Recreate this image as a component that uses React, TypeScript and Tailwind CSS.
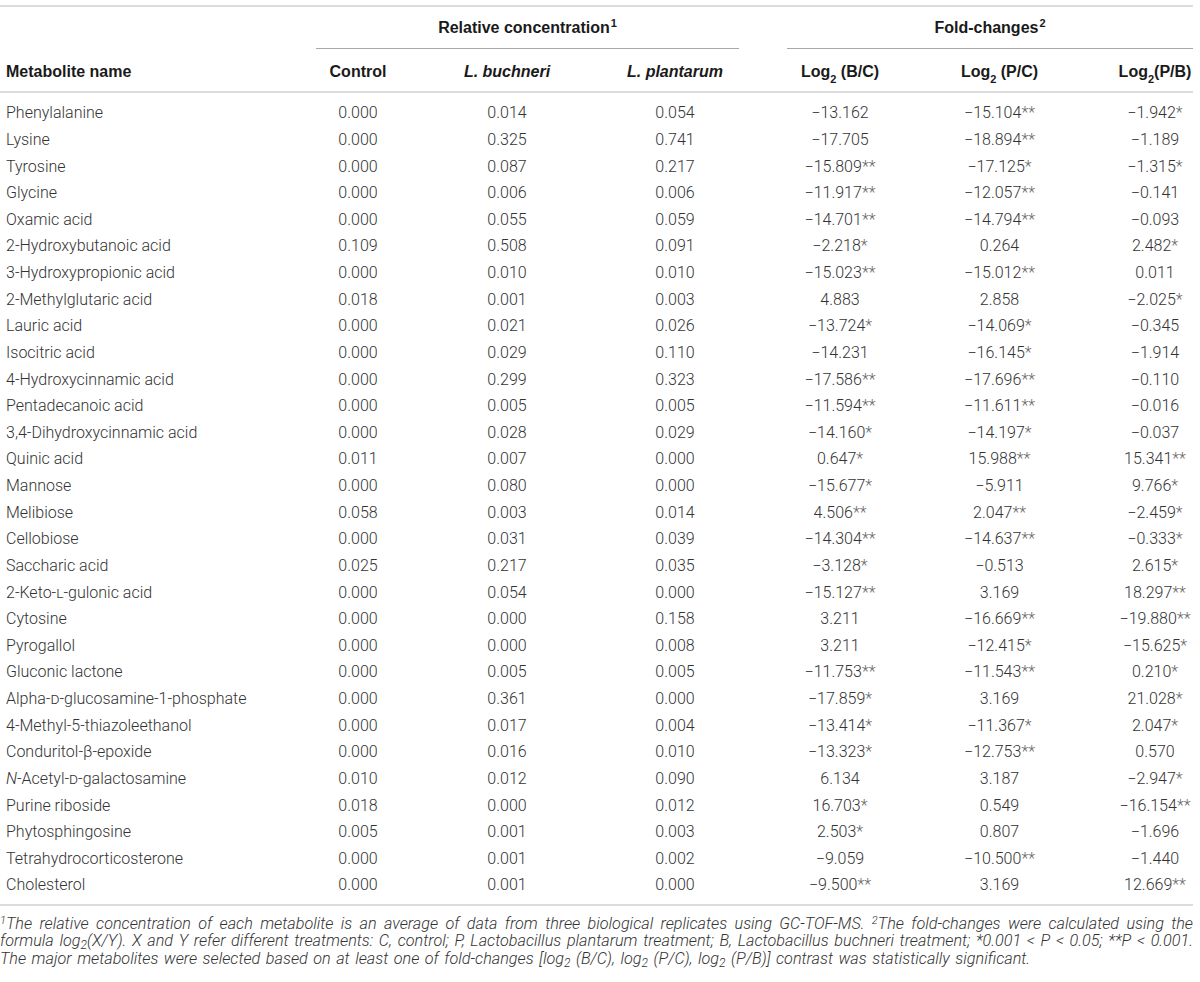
import React from "react"

type Row = {
  name: React.ReactNode
  control: string
  buchneri: string
  plantarum: string
  bc: string
  pc: string
  pb: string
}

const sc = (s: string) => <span className="[font-variant-caps:small-caps]">{s}</span>

const rows: Row[] = [
  { name: "Phenylalanine", control: "0.000", buchneri: "0.014", plantarum: "0.054", bc: "−13.162", pc: "−15.104**", pb: "−1.942*" },
  { name: "Lysine", control: "0.000", buchneri: "0.325", plantarum: "0.741", bc: "−17.705", pc: "−18.894**", pb: "−1.189" },
  { name: "Tyrosine", control: "0.000", buchneri: "0.087", plantarum: "0.217", bc: "−15.809**", pc: "−17.125*", pb: "−1.315*" },
  { name: "Glycine", control: "0.000", buchneri: "0.006", plantarum: "0.006", bc: "−11.917**", pc: "−12.057**", pb: "−0.141" },
  { name: "Oxamic acid", control: "0.000", buchneri: "0.055", plantarum: "0.059", bc: "−14.701**", pc: "−14.794**", pb: "−0.093" },
  { name: "2-Hydroxybutanoic acid", control: "0.109", buchneri: "0.508", plantarum: "0.091", bc: "−2.218*", pc: "0.264", pb: "2.482*" },
  { name: "3-Hydroxypropionic acid", control: "0.000", buchneri: "0.010", plantarum: "0.010", bc: "−15.023**", pc: "−15.012**", pb: "0.011" },
  { name: "2-Methylglutaric acid", control: "0.018", buchneri: "0.001", plantarum: "0.003", bc: "4.883", pc: "2.858", pb: "−2.025*" },
  { name: "Lauric acid", control: "0.000", buchneri: "0.021", plantarum: "0.026", bc: "−13.724*", pc: "−14.069*", pb: "−0.345" },
  { name: "Isocitric acid", control: "0.000", buchneri: "0.029", plantarum: "0.110", bc: "−14.231", pc: "−16.145*", pb: "−1.914" },
  { name: "4-Hydroxycinnamic acid", control: "0.000", buchneri: "0.299", plantarum: "0.323", bc: "−17.586**", pc: "−17.696**", pb: "−0.110" },
  { name: "Pentadecanoic acid", control: "0.000", buchneri: "0.005", plantarum: "0.005", bc: "−11.594**", pc: "−11.611**", pb: "−0.016" },
  { name: "3,4-Dihydroxycinnamic acid", control: "0.000", buchneri: "0.028", plantarum: "0.029", bc: "−14.160*", pc: "−14.197*", pb: "−0.037" },
  { name: "Quinic acid", control: "0.011", buchneri: "0.007", plantarum: "0.000", bc: "0.647*", pc: "15.988**", pb: "15.341**" },
  { name: "Mannose", control: "0.000", buchneri: "0.080", plantarum: "0.000", bc: "−15.677*", pc: "−5.911", pb: "9.766*" },
  { name: "Melibiose", control: "0.058", buchneri: "0.003", plantarum: "0.014", bc: "4.506**", pc: "2.047**", pb: "−2.459*" },
  { name: "Cellobiose", control: "0.000", buchneri: "0.031", plantarum: "0.039", bc: "−14.304**", pc: "−14.637**", pb: "−0.333*" },
  { name: "Saccharic acid", control: "0.025", buchneri: "0.217", plantarum: "0.035", bc: "−3.128*", pc: "−0.513", pb: "2.615*" },
  { name: <>2-Keto-{sc("l")}-gulonic acid</>, control: "0.000", buchneri: "0.054", plantarum: "0.000", bc: "−15.127**", pc: "3.169", pb: "18.297**" },
  { name: "Cytosine", control: "0.000", buchneri: "0.000", plantarum: "0.158", bc: "3.211", pc: "−16.669**", pb: "−19.880**" },
  { name: "Pyrogallol", control: "0.000", buchneri: "0.000", plantarum: "0.008", bc: "3.211", pc: "−12.415*", pb: "−15.625*" },
  { name: "Gluconic lactone", control: "0.000", buchneri: "0.005", plantarum: "0.005", bc: "−11.753**", pc: "−11.543**", pb: "0.210*" },
  { name: <>Alpha-{sc("d")}-glucosamine-1-phosphate</>, control: "0.000", buchneri: "0.361", plantarum: "0.000", bc: "−17.859*", pc: "3.169", pb: "21.028*" },
  { name: "4-Methyl-5-thiazoleethanol", control: "0.000", buchneri: "0.017", plantarum: "0.004", bc: "−13.414*", pc: "−11.367*", pb: "2.047*" },
  { name: "Conduritol-β-epoxide", control: "0.000", buchneri: "0.016", plantarum: "0.010", bc: "−13.323*", pc: "−12.753**", pb: "0.570" },
  { name: <><i>N</i>-Acetyl-{sc("d")}-galactosamine</>, control: "0.010", buchneri: "0.012", plantarum: "0.090", bc: "6.134", pc: "3.187", pb: "−2.947*" },
  { name: "Purine riboside", control: "0.018", buchneri: "0.000", plantarum: "0.012", bc: "16.703*", pc: "0.549", pb: "−16.154**" },
  { name: "Phytosphingosine", control: "0.005", buchneri: "0.001", plantarum: "0.003", bc: "2.503*", pc: "0.807", pb: "−1.696" },
  { name: "Tetrahydrocorticosterone", control: "0.000", buchneri: "0.001", plantarum: "0.002", bc: "−9.059", pc: "−10.500**", pb: "−1.440" },
  { name: "Cholesterol", control: "0.000", buchneri: "0.001", plantarum: "0.000", bc: "−9.500**", pc: "3.169", pb: "12.669**" },
]

// grid columns: name | control | buchneri | plantarum | B/C | P/C | P/B
const cols = "grid grid-cols-[288px_140px_158px_178px_152px_201px_76px]"

// split trailing asterisks so they can be drawn lighter
function Num({ v }: { v: string }) {
  const m = v.match(/^(.*?)(\*+)?$/)
  const base = m ? m[1] : v
  const stars = m && m[2] ? m[2] : ""
  return (
    <span className="whitespace-nowrap">
      {base}
      {stars && <span className="text-[#666]">{stars}</span>}
    </span>
  )
}

function Log2({ label, space = true }: { label: string; space?: boolean }) {
  return (
    <>
      Log<sub className="text-[11px] align-[-3px]">2</sub>
      {space ? " " : ""}
      {label}
    </>
  )
}

// footnote subscript: shifted without changing the line box
const fsub = "text-[12px] leading-none align-baseline relative top-[3px]"

export default function App() {
  return (
    <div className="w-[1200px] h-[982px] bg-white pt-[5px] text-[#333]">
      <div className="w-[1193px]">
        <div className="h-[2px] bg-[#dcdcdc]" />

        {/* group header */}
        <div className="flex font-['Liberation_Sans',Arial,sans-serif] font-bold text-[16px] text-[#1a1a1a]">
          <div className="w-[316px]" />
          <div className="w-[423px] flex flex-col">
            <div className="h-[41px] flex items-center justify-center">
              Relative concentration<sup className="text-[11px] ml-[1px] -top-[5px]">1</sup>
            </div>
            <div className="h-[1px] bg-[#a8a8a8]" />
          </div>
          <div className="w-[48px]" />
          <div className="w-[406px] flex flex-col">
            <div className="h-[41px] flex items-center justify-center">
              Fold-changes<sup className="text-[11px] ml-[1px] -top-[5px]">2</sup>
            </div>
            <div className="h-[1px] bg-[#a8a8a8]" />
          </div>
        </div>

        {/* column header */}
        <div className={`${cols} h-[42px] pt-[4px] items-center font-['Liberation_Sans',Arial,sans-serif] font-bold text-[16px] text-[#1a1a1a]`}>
          <div className="pl-[6px]">Metabolite name</div>
          <div className="text-center">Control</div>
          <div className="text-center italic">L. buchneri</div>
          <div className="text-center italic">L. plantarum</div>
          <div className="text-center whitespace-nowrap"><Log2 label="(B/C)" /></div>
          <div className="text-center whitespace-nowrap pr-[34px]"><Log2 label="(P/C)" /></div>
          <div className="text-center whitespace-nowrap"><Log2 label="(P/B)" space={false} /></div>
        </div>
        <div className="h-[2px] bg-[#dcdcdc]" />

        {/* body */}
        <div className="pt-[7px] pb-[5px] font-['Roboto','Liberation_Sans',sans-serif] font-light text-[16px]">
          {rows.map((r, i) => (
            <div key={i} className={`${cols} h-[26.63px] items-center`}>
              <div className="pl-[6px] whitespace-nowrap">{r.name}</div>
              <div className="text-center">{r.control}</div>
              <div className="text-center">{r.buchneri}</div>
              <div className="text-center">{r.plantarum}</div>
              <div className="text-center"><Num v={r.bc} /></div>
              <div className="text-center pr-[34px]"><Num v={r.pc} /></div>
              <div className="text-center"><Num v={r.pb} /></div>
            </div>
          ))}
        </div>
        <div className="h-[2px] bg-[#dcdcdc]" />

        {/* footnotes */}
        <div className="pt-[9px] font-['Roboto','Liberation_Sans',sans-serif] font-light italic text-[16.2px] leading-[17.5px] text-[#333]">
          <div className="text-justify [text-align-last:justify] whitespace-nowrap">
            <sup className="text-[11px] leading-none -top-[5px]">1</sup>The relative concentration of each metabolite is an average of data from three biological replicates using GC-TOF-MS.{" "}
            <sup className="text-[11px] leading-none -top-[5px]">2</sup>The fold-changes were calculated using the
          </div>
          <div className="text-justify [text-align-last:justify] whitespace-nowrap">
            formula log<sub className={fsub}>2</sub>(X/Y). X and Y refer different treatments: C, control; P, Lactobacillus plantarum treatment; B, Lactobacillus buchneri treatment; *0.001 &lt; P &lt; 0.05; **P &lt; 0.001.
          </div>
          <div className="whitespace-nowrap [word-spacing:1.6px]">
            The major metabolites were selected based on at least one of fold-changes [log<sub className={fsub}>2</sub> (B/C), log<sub className={fsub}>2</sub> (P/C), log<sub className={fsub}>2</sub> (P/B)] contrast was statistically significant.
          </div>
        </div>
      </div>
    </div>
  )
}
